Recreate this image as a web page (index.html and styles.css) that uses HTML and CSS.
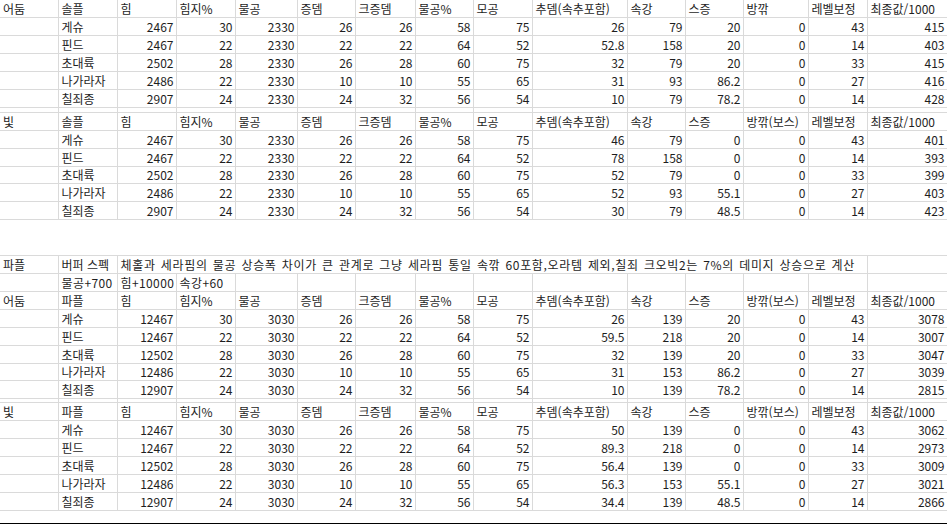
FILE: index.html
```html
<!DOCTYPE html>
<html lang="ko">
<head>
<meta charset="utf-8">
<title>시트</title>
<link rel="stylesheet" href="styles.css">
</head>
<body>
<div class="sheet">
<table class="grid">
<colgroup>
<col class="c58"><col class="c59"><col class="c59"><col class="c59"><col class="c62"><col class="c58"><col class="c60"><col class="c58"><col class="c59"><col class="c95"><col class="c58"><col class="c58"><col class="c65"><col class="c59"><col class="c80">
</colgroup>
<tbody>
<tr class="row"><td>어둠</td><td>솔플</td><td>힘</td><td>힘지%</td><td>물공</td><td>증뎀</td><td>크증뎀</td><td>물공%</td><td>모공</td><td>추뎀(속추포함)</td><td>속강</td><td>스증</td><td>방깎</td><td>레벨보정</td><td>최종값/1000</td></tr>
<tr class="row"><td></td><td>게슈</td><td class="n">2467</td><td class="n">30</td><td class="n">2330</td><td class="n">26</td><td class="n">26</td><td class="n">58</td><td class="n">75</td><td class="n">26</td><td class="n">79</td><td class="n">20</td><td class="n">0</td><td class="n">43</td><td class="n">415</td></tr>
<tr class="row"><td></td><td>핀드</td><td class="n">2467</td><td class="n">22</td><td class="n">2330</td><td class="n">22</td><td class="n">22</td><td class="n">64</td><td class="n">52</td><td class="n">52.8</td><td class="n">158</td><td class="n">20</td><td class="n">0</td><td class="n">14</td><td class="n">403</td></tr>
<tr class="row"><td></td><td>초대륙</td><td class="n">2502</td><td class="n">28</td><td class="n">2330</td><td class="n">26</td><td class="n">28</td><td class="n">60</td><td class="n">75</td><td class="n">32</td><td class="n">79</td><td class="n">20</td><td class="n">0</td><td class="n">33</td><td class="n">415</td></tr>
<tr class="row"><td></td><td>나가라자</td><td class="n">2486</td><td class="n">22</td><td class="n">2330</td><td class="n">10</td><td class="n">10</td><td class="n">55</td><td class="n">65</td><td class="n">31</td><td class="n">93</td><td class="n">86.2</td><td class="n">0</td><td class="n">27</td><td class="n">416</td></tr>
<tr class="row"><td></td><td>칠죄종</td><td class="n">2907</td><td class="n">24</td><td class="n">2330</td><td class="n">24</td><td class="n">32</td><td class="n">56</td><td class="n">54</td><td class="n">10</td><td class="n">79</td><td class="n">78.2</td><td class="n">0</td><td class="n">14</td><td class="n">428</td></tr>
<tr class="thin thin-a"><td></td><td></td><td></td><td></td><td></td><td></td><td></td><td></td><td></td><td></td><td></td><td></td><td></td><td></td><td></td></tr>
<tr class="row"><td>빛</td><td>솔플</td><td>힘</td><td>힘지%</td><td>물공</td><td>증뎀</td><td>크증뎀</td><td>물공%</td><td>모공</td><td>추뎀(속추포함)</td><td>속강</td><td>스증</td><td>방깎(보스)</td><td>레벨보정</td><td>최종값/1000</td></tr>
<tr class="row"><td></td><td>게슈</td><td class="n">2467</td><td class="n">30</td><td class="n">2330</td><td class="n">26</td><td class="n">26</td><td class="n">58</td><td class="n">75</td><td class="n">46</td><td class="n">79</td><td class="n">0</td><td class="n">0</td><td class="n">43</td><td class="n">401</td></tr>
<tr class="row"><td></td><td>핀드</td><td class="n">2467</td><td class="n">22</td><td class="n">2330</td><td class="n">22</td><td class="n">22</td><td class="n">64</td><td class="n">52</td><td class="n">78</td><td class="n">158</td><td class="n">0</td><td class="n">0</td><td class="n">14</td><td class="n">393</td></tr>
<tr class="row"><td></td><td>초대륙</td><td class="n">2502</td><td class="n">28</td><td class="n">2330</td><td class="n">26</td><td class="n">28</td><td class="n">60</td><td class="n">75</td><td class="n">52</td><td class="n">79</td><td class="n">0</td><td class="n">0</td><td class="n">33</td><td class="n">399</td></tr>
<tr class="row"><td></td><td>나가라자</td><td class="n">2486</td><td class="n">22</td><td class="n">2330</td><td class="n">10</td><td class="n">10</td><td class="n">55</td><td class="n">65</td><td class="n">52</td><td class="n">93</td><td class="n">55.1</td><td class="n">0</td><td class="n">27</td><td class="n">403</td></tr>
<tr class="row"><td></td><td>칠죄종</td><td class="n">2907</td><td class="n">24</td><td class="n">2330</td><td class="n">24</td><td class="n">32</td><td class="n">56</td><td class="n">54</td><td class="n">30</td><td class="n">79</td><td class="n">48.5</td><td class="n">0</td><td class="n">14</td><td class="n">423</td></tr>
</tbody>
</table>

<div class="gap"></div>

<table class="grid grid-b">
<colgroup>
<col class="c58"><col class="c59"><col class="c59"><col class="c59"><col class="c62"><col class="c58"><col class="c60"><col class="c58"><col class="c59"><col class="c95"><col class="c58"><col class="c58"><col class="c65"><col class="c59"><col class="c80">
</colgroup>
<tbody>
<tr class="row top"><td>파플</td><td>버퍼 스펙</td><td colspan="12" class="note">체홀과 세라핌의 물공 상승폭 차이가 큰 관계로 그냥 세라핌 통일 속깎 60포함,오라템 제외,칠죄 크오빅2는 7%의 데미지 상승으로 계산</td><td></td></tr>
<tr class="row"><td></td><td class="plus">물공+700</td><td class="plus">힘+10000</td><td class="plus">속강+60</td><td></td><td></td><td></td><td></td><td></td><td></td><td></td><td></td><td></td><td></td><td></td></tr>
<tr class="row"><td>어둠</td><td>파플</td><td>힘</td><td>힘지%</td><td>물공</td><td>증뎀</td><td>크증뎀</td><td>물공%</td><td>모공</td><td>추뎀(속추포함)</td><td>속강</td><td>스증</td><td>방깎(보스)</td><td>레벨보정</td><td>최종값/1000</td></tr>
<tr class="row"><td></td><td>게슈</td><td class="n">12467</td><td class="n">30</td><td class="n">3030</td><td class="n">26</td><td class="n">26</td><td class="n">58</td><td class="n">75</td><td class="n">26</td><td class="n">139</td><td class="n">20</td><td class="n">0</td><td class="n">43</td><td class="n">3078</td></tr>
<tr class="row"><td></td><td>핀드</td><td class="n">12467</td><td class="n">22</td><td class="n">3030</td><td class="n">22</td><td class="n">22</td><td class="n">64</td><td class="n">52</td><td class="n">59.5</td><td class="n">218</td><td class="n">20</td><td class="n">0</td><td class="n">14</td><td class="n">3007</td></tr>
<tr class="row"><td></td><td>초대륙</td><td class="n">12502</td><td class="n">28</td><td class="n">3030</td><td class="n">26</td><td class="n">28</td><td class="n">60</td><td class="n">75</td><td class="n">32</td><td class="n">139</td><td class="n">20</td><td class="n">0</td><td class="n">33</td><td class="n">3047</td></tr>
<tr class="row"><td></td><td>나가라자</td><td class="n">12486</td><td class="n">22</td><td class="n">3030</td><td class="n">10</td><td class="n">10</td><td class="n">55</td><td class="n">65</td><td class="n">31</td><td class="n">153</td><td class="n">86.2</td><td class="n">0</td><td class="n">27</td><td class="n">3039</td></tr>
<tr class="row"><td></td><td>칠죄종</td><td class="n">12907</td><td class="n">24</td><td class="n">3030</td><td class="n">24</td><td class="n">32</td><td class="n">56</td><td class="n">54</td><td class="n">10</td><td class="n">139</td><td class="n">78.2</td><td class="n">0</td><td class="n">14</td><td class="n">2815</td></tr>
<tr class="thin thin-b"><td></td><td></td><td></td><td></td><td></td><td></td><td></td><td></td><td></td><td></td><td></td><td></td><td></td><td></td><td></td></tr>
<tr class="row"><td>빛</td><td>파플</td><td>힘</td><td>힘지%</td><td>물공</td><td>증뎀</td><td>크증뎀</td><td>물공%</td><td>모공</td><td>추뎀(속추포함)</td><td>속강</td><td>스증</td><td>방깎(보스)</td><td>레벨보정</td><td>최종값/1000</td></tr>
<tr class="row"><td></td><td>게슈</td><td class="n">12467</td><td class="n">30</td><td class="n">3030</td><td class="n">26</td><td class="n">26</td><td class="n">58</td><td class="n">75</td><td class="n">50</td><td class="n">139</td><td class="n">0</td><td class="n">0</td><td class="n">43</td><td class="n">3062</td></tr>
<tr class="row"><td></td><td>핀드</td><td class="n">12467</td><td class="n">22</td><td class="n">3030</td><td class="n">22</td><td class="n">22</td><td class="n">64</td><td class="n">52</td><td class="n">89.3</td><td class="n">218</td><td class="n">0</td><td class="n">0</td><td class="n">14</td><td class="n">2973</td></tr>
<tr class="row"><td></td><td>초대륙</td><td class="n">12502</td><td class="n">28</td><td class="n">3030</td><td class="n">26</td><td class="n">28</td><td class="n">60</td><td class="n">75</td><td class="n">56.4</td><td class="n">139</td><td class="n">0</td><td class="n">0</td><td class="n">33</td><td class="n">3009</td></tr>
<tr class="row"><td></td><td>나가라자</td><td class="n">12486</td><td class="n">22</td><td class="n">3030</td><td class="n">10</td><td class="n">10</td><td class="n">55</td><td class="n">65</td><td class="n">56.3</td><td class="n">153</td><td class="n">55.1</td><td class="n">0</td><td class="n">27</td><td class="n">3021</td></tr>
<tr class="row"><td></td><td>칠죄종</td><td class="n">12907</td><td class="n">24</td><td class="n">3030</td><td class="n">24</td><td class="n">32</td><td class="n">56</td><td class="n">54</td><td class="n">34.4</td><td class="n">139</td><td class="n">48.5</td><td class="n">0</td><td class="n">14</td><td class="n">2866</td></tr>
</tbody>
</table>

<div class="tail"></div>
<div class="edge"></div>
</div>
</body>
</html>
```

FILE: styles.css
```css
html, body {
  margin: 0;
  padding: 0;
  background: #ffffff;
}

.sheet {
  width: 947px;
  height: 524px;
  overflow: hidden;
  font-family: "Noto Sans CJK KR", "Noto Sans", sans-serif;
  font-size: 12px;
  color: #1e1e1e;
}

.grid {
  border-collapse: collapse;
  table-layout: fixed;
  width: 947px;
}

.c58 { width: 58px; }
.c59 { width: 59px; }
.c60 { width: 60px; }
.c62 { width: 62px; }
.c65 { width: 65px; }
.c95 { width: 95px; }
.c80 { width: 80px; }

.grid td {
  padding: 0 2px 0 3px;
  border-right: 1px solid #dadada;
  border-bottom: 1px solid #dadada;
  white-space: nowrap;
  overflow: hidden;
  line-height: 16px;
  vertical-align: bottom;
  text-align: left;
}

.grid td.n {
  text-align: right;
}

.row {
  height: 17.9px;
}

.thin-a {
  height: 5px;
}

.thin-b {
  height: 4px;
}

.thin td {
  line-height: 0;
  padding: 0;
}

.top td {
  border-top: 1px solid #dadada;
}

.grid td.note {
  overflow: visible;
  word-spacing: 1.2px;
  letter-spacing: 0.66px;
}

.grid td.plus {
  letter-spacing: 0.4px;
}

.gap {
  height: 35px;
}

.tail {
  height: 12px;
}

.edge {
  height: 2px;
  background: #000000;
}
```
